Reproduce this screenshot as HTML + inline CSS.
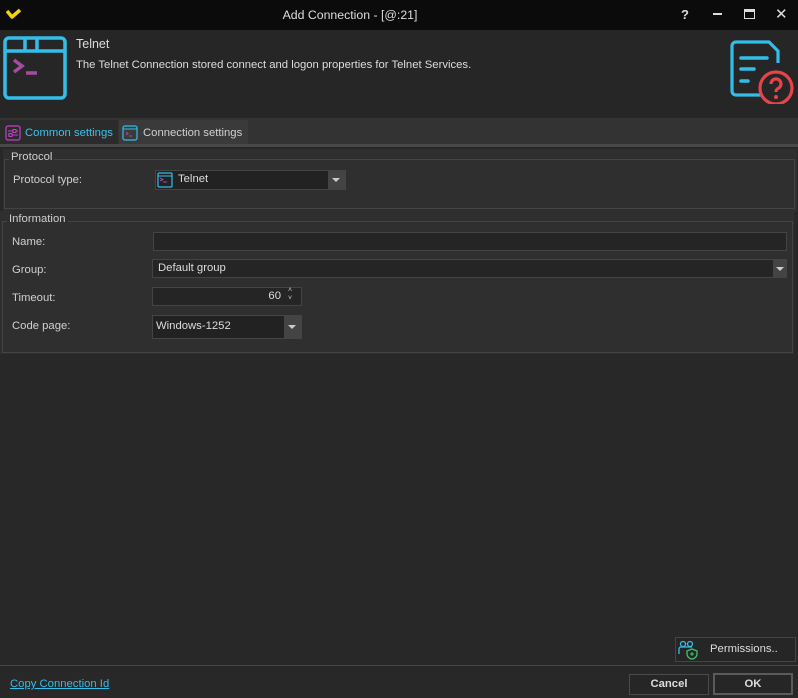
<!DOCTYPE html>
<html><head><style>
*{margin:0;padding:0;box-sizing:border-box}
body{width:798px;height:698px;background:#282828;font-family:"Liberation Sans",sans-serif;font-size:11.3px;color:#d8d8d8;position:relative;overflow:hidden}
.a{position:absolute}
.fs{position:absolute;border:1px solid #444;}
.inp{position:absolute;background:#252525;border:1px solid #444;height:20px;}
.lbl{position:absolute;color:#d0d0d0}
</style></head><body>
<div class="a" style="left:0;top:0;width:798px;height:30px;background:#0b0b0b"></div>
<svg class="a" style="left:6px;top:8px" width="16" height="12"><path d="M1 3 L6 9 L14 2" stroke="#f2d30c" stroke-width="3.5" fill="none" stroke-linejoin="round"/></svg>
<div class="a" style="left:0;width:700px;top:8px;text-align:center;font-size:12.3px;color:#ddd">Add Connection - [@:21]</div>
<div class="a" style="left:681px;top:7px;font-weight:bold;font-size:13px;color:#ddd">?</div>
<div class="a" style="left:713px;top:13px;width:9px;height:2px;background:#ddd"></div>
<div class="a" style="left:744px;top:9px;width:11px;height:10px;border:1px solid #ddd;border-top:3px solid #ddd"></div>
<div class="a" style="left:775px;top:5px;font-size:15px;color:#ddd">✕</div>
<div class="a" style="left:0;top:30px;width:798px;height:88px;background:#262626"></div>
<svg class="a" style="left:3px;top:36px" width="66" height="64"><rect x="2" y="2" width="60" height="60" rx="4" fill="none" stroke="#33bde9" stroke-width="3.5"/><path d="M2 15H62M22 2V15M34 2V15" stroke="#33bde9" stroke-width="3.5"/><path d="M11 24L19 30L11 36" stroke="#a44da0" stroke-width="3.5" fill="none"/><path d="M23 37H34" stroke="#a44da0" stroke-width="3.5"/></svg>
<div class="a" style="left:76px;top:37px;font-size:12.5px;color:#ddd">Telnet</div>
<div class="a" style="left:76px;top:59px;color:#ddd">The Telnet Connection stored connect and logon properties for Telnet Services.</div>
<svg class="a" style="left:730px;top:40px" width="66" height="64"><path d="M36 55H6a4 4 0 0 1-4-4V6a4 4 0 0 1 4-4h33l9 9v12" stroke="#33bde9" stroke-width="3.2" fill="none"/><path d="M11 18H37M11 29H24M11 41H18" stroke="#33bde9" stroke-width="3.5" stroke-linecap="round"/><circle cx="46" cy="48" r="16" fill="#262626" stroke="#e8434a" stroke-width="3.2"/><path d="M41 44a5 5 0 1 1 7 4.5c-1.5 .8-2 1.5-2 3.5" stroke="#e8434a" stroke-width="3.2" fill="none"/><circle cx="46" cy="57" r="2" fill="#e8434a"/></svg>
<div class="a" style="left:0;top:118px;width:798px;height:27px;background:#333"></div>
<div class="a" style="left:0;top:120px;width:118px;height:25px;background:#2b2b2b"></div>
<svg class="a" style="left:5px;top:125px" width="16" height="16"><rect x="1" y="1" width="14" height="14" rx="2" fill="none" stroke="#c040c8" stroke-width="1.2"/><path d="M3 6H13M3 10H13" stroke="#c040c8"/><rect x="8" y="4.5" width="3" height="3" fill="#2b2b2b" stroke="#c040c8"/><rect x="4" y="8.5" width="3" height="3" fill="#2b2b2b" stroke="#c040c8"/></svg>
<div class="a" style="left:25px;top:127px;color:#3cc0ea">Common settings</div>
<div class="a" style="left:119px;top:120px;width:129px;height:25px;background:#3a3a3a"></div>
<svg class="a" style="left:122px;top:125px" width="16" height="16"><rect x="1" y="1" width="14" height="14" rx="2" fill="none" stroke="#33bde9" stroke-width="1.2"/><path d="M1 4H15" stroke="#33bde9"/><path d="M4 7L6 8.5L4 10M7 11H10" stroke="#a44da0" fill="none"/></svg>
<div class="a" style="left:143px;top:127px;color:#d0d0d0">Connection settings</div>
<div class="a" style="left:0;top:144px;width:798px;height:3px;background:#484848"></div>
<div class="a" style="left:3px;top:149px;width:794px;height:62px;background:#2f2f2f"></div>
<div class="fs" style="left:4px;top:159px;width:791px;height:50px"></div>
<div class="a" style="left:9px;top:151px;background:#2f2f2f;padding:0 2px;color:#d0d0d0">Protocol</div>
<div class="lbl" style="left:13px;top:174px">Protocol type:</div>
<div class="inp" style="left:155px;top:170px;width:191px;height:20px;background:#222"></div>
<div class="a" style="left:328px;top:171px;width:17px;height:18px;background:#444"></div>
<div class="a" style="left:332px;top:178px;border:4px solid transparent;border-top:4px solid #ccc"></div>
<svg class="a" style="left:157px;top:172px" width="16" height="16"><rect x="1" y="1" width="14" height="14" rx="1" fill="none" stroke="#33bde9" stroke-width="1.2"/><path d="M1 4H15" stroke="#33bde9"/><path d="M3 6L6 7.5L3 9M6 10H10" stroke="#a44da0" fill="none"/></svg>
<div class="a" style="left:178px;top:173px;color:#ddd">Telnet</div>
<div class="a" style="left:0;top:211px;width:794px;height:143px;background:#2f2f2f"></div>
<div class="fs" style="left:2px;top:221px;width:791px;height:132px"></div>
<div class="a" style="left:7px;top:213px;background:#2f2f2f;padding:0 2px;color:#d0d0d0">Information</div>
<div class="lbl" style="left:12px;top:236px">Name:</div>
<div class="inp" style="left:153px;top:232px;width:634px;height:19px"></div>
<div class="lbl" style="left:12px;top:264px">Group:</div>
<div class="inp" style="left:152px;top:259px;width:635px;height:19px"><span style="position:absolute;left:5px;top:2px;color:#ddd">Default group</span></div>
<div class="a" style="left:773px;top:259px;width:14px;height:19px;background:#444"></div>
<div class="a" style="left:776px;top:267px;border:4px solid transparent;border-top:4px solid #ccc"></div>
<div class="lbl" style="left:12px;top:292px">Timeout:</div>
<div class="inp" style="left:152px;top:287px;width:150px;height:19px"><span style="position:absolute;right:20px;top:2px;color:#ddd">60</span></div>
<div class="a" style="left:288px;top:287px;font-size:7px;line-height:8px;color:#ccc">˄<br>˅</div>
<div class="lbl" style="left:12px;top:320px">Code page:</div>
<div class="inp" style="left:152px;top:315px;width:150px;height:24px;background:#222"><span style="position:absolute;left:3px;top:4px;color:#ddd">Windows-1252</span></div>
<div class="a" style="left:284px;top:316px;width:17px;height:22px;background:#444"></div>
<div class="a" style="left:288px;top:325px;border:4px solid transparent;border-top:4px solid #ccc"></div>
<div class="a" style="left:675px;top:637px;width:121px;height:25px;border:1px solid #444;background:#262626"></div>
<svg class="a" style="left:678px;top:640px" width="20" height="20"><circle cx="5" cy="4" r="2.5" fill="none" stroke="#33bde9" stroke-width="1.3"/><circle cx="12" cy="4" r="2.5" fill="none" stroke="#33bde9" stroke-width="1.3"/><path d="M1 14V9a2 2 0 0 1 2-2h11" fill="none" stroke="#33bde9" stroke-width="1.3"/><path d="M9 11l5-2 5 2v3c0 3-3 5-5 5s-5-2-5-5z" fill="#262626" stroke="#3fc06a" stroke-width="1.3"/><path d="M14 12v4M12 14h4" stroke="#3fc06a"/></svg>
<div class="a" style="left:710px;top:643px;color:#ddd">Permissions..</div>
<div class="a" style="left:0;top:665px;width:798px;height:1px;background:#444"></div>
<div class="a" style="left:10px;top:678px;color:#33bde9;text-decoration:underline">Copy Connection Id</div>
<div class="a" style="left:629px;top:674px;width:80px;height:21px;border:1px solid #4a4a4a;background:#262626;text-align:center;line-height:19px;font-weight:bold;color:#ddd">Cancel</div>
<div class="a" style="left:713px;top:673px;width:80px;height:22px;border:2px solid #5a5a5a;background:#262626;text-align:center;line-height:18px;font-weight:bold;color:#ddd">OK</div>
</body></html>
